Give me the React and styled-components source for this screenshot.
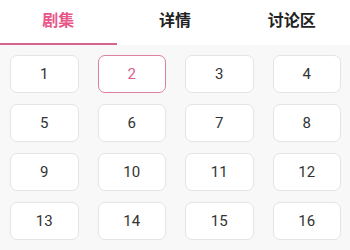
import styled, { createGlobalStyle } from 'styled-components'

const pink = '#e8578a'

const GlobalStyle = createGlobalStyle`
	html, body {
		margin: 0;
		padding: 0;
		background: #f8f8f8;
		font-family: Roboto, "Noto Sans CJK SC", sans-serif;
	}
`

const Page = styled.div`
	width: 350px;
	height: 250px;
	overflow: hidden;
	background: #f8f8f8;
`

const TabBar = styled.div`
	display: flex;
	height: 45px;
	background: #fff;
`

const Tab = styled.div`
	flex: 1;
	display: flex;
	align-items: center;
	justify-content: center;
	padding-bottom: 6px;
	box-sizing: border-box;
	font-size: 16px;
	font-weight: bold;
	color: ${props => (props.$active ? pink : '#222')};
	border-bottom: 2px solid ${props => (props.$active ? '#d6648e' : 'transparent')};
`

const Grid = styled.div`
	display: grid;
	grid-template-columns: repeat(4, 1fr);
	gap: 11px 19px;
	padding: 10px 9px 0 10px;
`

const Episode = styled.div`
	height: 38px;
	display: flex;
	align-items: center;
	justify-content: center;
	box-sizing: border-box;
	background: #fff;
	border: 1px solid ${props => (props.$active ? '#dc7fa0' : '#e4e4e4')};
	border-radius: 7px;
	font-size: 15px;
	color: ${props => (props.$active ? '#d9608c' : '#333')};
`

const tabs = ['剧集', '详情', '讨论区']
const episodes = Array.from({ length: 16 }, (_, i) => i + 1)

export default function App() {
	return (
		<Page>
			<GlobalStyle />
			<TabBar>
				{tabs.map((t, i) => (
					<Tab key={t} $active={i === 0}>
						{t}
					</Tab>
				))}
			</TabBar>
			<Grid>
				{episodes.map(n => (
					<Episode key={n} $active={n === 2}>
						{n}
					</Episode>
				))}
			</Grid>
		</Page>
	)
}
